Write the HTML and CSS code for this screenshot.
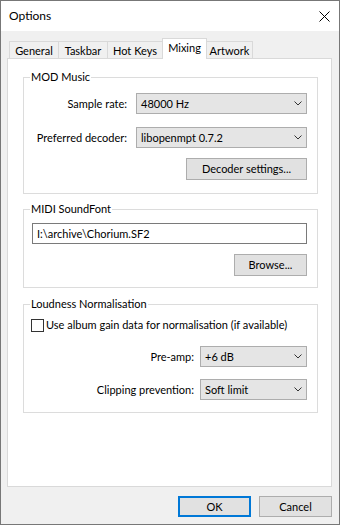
FILE: index.html
```html
<!DOCTYPE html>
<html>
<head>
<meta charset="utf-8">
<link rel="stylesheet" href="styles.css">
</head>
<body>
<div class="window">
  <div class="titlebar">
    <span class="title">Options</span>
    <svg class="close" width="11" height="11" viewBox="0 0 11 11"><path d="M0.5 0.5L10.5 10.5M10.5 0.5L0.5 10.5" stroke="#000" stroke-width="1" fill="none"/></svg>
  </div>
  <div class="body">
    <div class="tabs">
      <div class="tab w-general">General</div>
      <div class="tab w-taskbar">Taskbar</div>
      <div class="tab w-hotkeys">Hot Keys</div>
      <div class="tab active w-mixing">Mixing</div>
      <div class="tab w-artwork">Artwork</div>
    </div>
    <div class="panel">
      <div class="group group-mod">
        <div class="legend">MOD Music</div>
        <div class="form form-mod">
          <span class="label">Sample rate:</span>
          <div class="combo"><span>48000 Hz</span><svg class="chev" width="8" height="5" viewBox="0 0 8 5"><path d="M0.5 0.5L4 4L7.5 0.5" stroke="#333" fill="none"/></svg></div>
          <span class="label">Preferred decoder:</span>
          <div class="combo"><span>libopenmpt 0.7.2</span><svg class="chev" width="8" height="5" viewBox="0 0 8 5"><path d="M0.5 0.5L4 4L7.5 0.5" stroke="#333" fill="none"/></svg></div>
        </div>
        <div class="btnrow"><div class="btn btn-decoder">Decoder settings...</div></div>
      </div>
      <div class="group group-midi">
        <div class="legend">MIDI SoundFont</div>
        <div class="edit">I:\archive\Chorium.SF2</div>
        <div class="btnrow"><div class="btn btn-browse">Browse...</div></div>
      </div>
      <div class="group group-loud">
        <div class="legend">Loudness Normalisation</div>
        <div class="check"><span class="box"></span><span>Use album gain data for normalisation (if available)</span></div>
        <div class="form form-loud">
          <span class="label">Pre-amp:</span>
          <div class="combo"><span>+6 dB</span><svg class="chev" width="8" height="5" viewBox="0 0 8 5"><path d="M0.5 0.5L4 4L7.5 0.5" stroke="#333" fill="none"/></svg></div>
          <span class="label">Clipping prevention:</span>
          <div class="combo"><span>Soft limit</span><svg class="chev" width="8" height="5" viewBox="0 0 8 5"><path d="M0.5 0.5L4 4L7.5 0.5" stroke="#333" fill="none"/></svg></div>
        </div>
      </div>
    </div>
    <div class="footer">
      <div class="btn btn-ok">OK</div>
      <div class="btn btn-cancel">Cancel</div>
    </div>
  </div>
</div>
</body>
</html>
```

FILE: styles.css
```css
* { box-sizing: border-box; }
html, body { margin: 0; padding: 0; background: #fff; }
body {
  font-family: Lato, "Noto Sans", sans-serif;
  font-size: 11px;
  line-height: 16px;
  color: #000;
}
.window {
  width: 340px;
  height: 525px;
  border: 1px solid #777;
  display: flex;
  flex-direction: column;
}
.titlebar {
  height: 30px;
  flex: none;
  background: #fff;
  display: flex;
  align-items: center;
  justify-content: space-between;
  padding: 0 9px 0 8px;
}
.title { font-size: 12px; }
.close { display: block; }
.body {
  flex: 1;
  background: #f0f0f0;
  display: flex;
  flex-direction: column;
  padding: 7px 7px 7px 6px;
}
.tabs {
  display: flex;
  align-items: flex-end;
  height: 20px;
  padding-left: 2px;
  flex: none;
}
.tab {
  height: 17px;
  border: 1px solid #d9d9d9;
  border-bottom: none;
  background: #f0f0f0;
  text-align: center;
  line-height: 17px;
  margin-left: -1px;
}
.tab:first-child { margin-left: 0; }
.tab.active {
  height: 21px;
  margin-bottom: -1px;
  background: #fff;
  position: relative;
  z-index: 1;
  line-height: 17px;
}
.w-general { width: 50px; }
.w-taskbar { width: 50px; }
.w-hotkeys { width: 56px; }
.w-mixing { width: 45px; }
.w-artwork { width: 47px; }
.panel {
  flex: 1;
  background: #fff;
  border: 1px solid #d9d9d9;
  padding: 0 13px 0 15px;
  display: flex;
  flex-direction: column;
}
.group {
  border: 1px solid #dcdcdc;
  display: flex;
  flex-direction: column;
  padding: 0 10px 0 0;
}
.legend {
  align-self: flex-start;
  margin: -9px 0 0 6px;
  padding: 0 1px;
  background: #fff;
  line-height: 16px;
  height: 16px;
}
.group-mod { margin-top: 18px; padding-bottom: 13px; }
.group-midi { margin-top: 15px; padding-bottom: 11px; }
.group-loud { margin-top: 16px; padding-bottom: 12px; }
.form {
  display: grid;
  align-items: center;
}
.form-mod {
  grid-template-columns: 1fr 171px;
  column-gap: 9px;
  row-gap: 13px;
  margin-top: 8px;
}
.form-loud {
  grid-template-columns: 1fr 107px;
  column-gap: 6px;
  row-gap: 12px;
  margin-top: 13px;
}
.label { text-align: right; white-space: nowrap; }
.combo {
  height: 21px;
  background: #e5e5e5;
  border: 1px solid #adadad;
  display: flex;
  align-items: center;
  justify-content: space-between;
  padding: 0 4px 0 4px;
  white-space: nowrap;
}
.chev { display: block; flex: none; }
.btnrow {
  display: flex;
  justify-content: flex-end;
}
.group-mod .btnrow { margin-top: 10px; }
.group-midi .btnrow { margin-top: 10px; }
.btn {
  height: 22px;
  background: #e1e1e1;
  border: 1px solid #adadad;
  display: flex;
  align-items: center;
  justify-content: center;
  white-space: nowrap;
}
.btn-decoder { width: 121px; }
.btn-browse { width: 73px; }
.edit {
  margin: 6px 0 0 8px;
  height: 21px;
  border: 1px solid #7a7a7a;
  background: #fff;
  padding: 0 4px;
  display: flex;
  align-items: center;
  white-space: nowrap;
}
.check {
  margin: 5px 0 0 7px;
  display: flex;
  align-items: center;
  gap: 2px;
  white-space: nowrap;
}
.box {
  width: 13px;
  height: 13px;
  border: 1px solid #333;
  background: #fff;
  flex: none;
}
.footer {
  flex: none;
  margin-top: 9px;
  display: flex;
  justify-content: flex-end;
  gap: 8px;
}
.footer .btn { width: 73px; height: 21px; }
.btn-ok { border: 2px solid #0078d7; }
```
